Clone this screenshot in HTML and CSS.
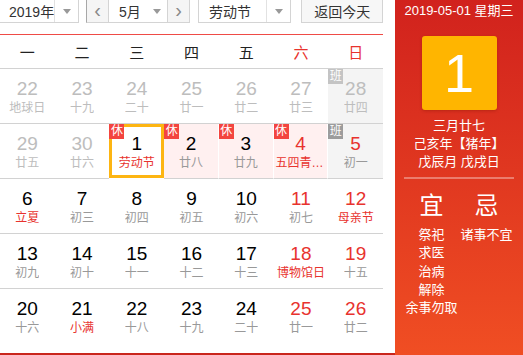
FILE: index.html
```html
<!DOCTYPE html>
<html lang="zh-CN">
<head>
  <meta charset="UTF-8">
  <title>万年历</title>
  <link rel="stylesheet" href="styles.css">
</head>
<body>
  <div class="calendar">
    <div class="main">
      <div class="toolbar">
        <div class="select year">
          <span class="value">2019年</span>
          <span class="drop"><i class="caret"></i></span>
        </div>
        <div class="month-group">
          <span class="nav prev">&lsaquo;</span>
          <div class="select month">
            <span class="value">5月</span>
            <span class="drop"><i class="caret"></i></span>
          </div>
          <span class="nav next">&rsaquo;</span>
        </div>
        <div class="select holiday">
          <span class="value">劳动节</span>
          <span class="drop"><i class="caret"></i></span>
        </div>
        <button class="today">返回今天</button>
      </div>

      <div class="weekdays">
        <span>一</span><span>二</span><span>三</span><span>四</span><span>五</span>
        <span class="weekend">六</span><span class="weekend">日</span>
      </div>

      <div class="grid">
        <div class="day other"><b>22</b><span>地球日</span></div>
        <div class="day other"><b>23</b><span>十九</span></div>
        <div class="day other"><b>24</b><span>二十</span></div>
        <div class="day other"><b>25</b><span>廿一</span></div>
        <div class="day other"><b>26</b><span>廿二</span></div>
        <div class="day other"><b>27</b><span>廿三</span></div>
        <div class="day other work"><em class="tag">班</em><b>28</b><span>廿四</span></div>

        <div class="day other"><b>29</b><span>廿五</span></div>
        <div class="day other"><b>30</b><span>廿六</span></div>
        <div class="day rest selected"><em class="tag">休</em><b>1</b><span class="fest">劳动节</span></div>
        <div class="day rest"><em class="tag">休</em><b>2</b><span>廿八</span></div>
        <div class="day rest"><em class="tag">休</em><b>3</b><span>廿九</span></div>
        <div class="day rest red"><em class="tag">休</em><b>4</b><span class="fest">五四青年节</span></div>
        <div class="day work red"><em class="tag">班</em><b>5</b><span>初一</span></div>

        <div class="day"><b>6</b><span class="fest">立夏</span></div>
        <div class="day"><b>7</b><span>初三</span></div>
        <div class="day"><b>8</b><span>初四</span></div>
        <div class="day"><b>9</b><span>初五</span></div>
        <div class="day"><b>10</b><span>初六</span></div>
        <div class="day red"><b>11</b><span>初七</span></div>
        <div class="day red"><b>12</b><span class="fest">母亲节</span></div>

        <div class="day"><b>13</b><span>初九</span></div>
        <div class="day"><b>14</b><span>初十</span></div>
        <div class="day"><b>15</b><span>十一</span></div>
        <div class="day"><b>16</b><span>十二</span></div>
        <div class="day"><b>17</b><span>十三</span></div>
        <div class="day red"><b>18</b><span class="fest">博物馆日</span></div>
        <div class="day red"><b>19</b><span>十五</span></div>

        <div class="day"><b>20</b><span>十六</span></div>
        <div class="day"><b>21</b><span class="fest">小满</span></div>
        <div class="day"><b>22</b><span>十八</span></div>
        <div class="day"><b>23</b><span>十九</span></div>
        <div class="day"><b>24</b><span>二十</span></div>
        <div class="day red"><b>25</b><span>廿一</span></div>
        <div class="day red"><b>26</b><span>廿二</span></div>
      </div>
    </div>

    <div class="side">
      <div class="side-date">2019-05-01 星期三</div>
      <div class="big-day">1</div>
      <div class="lunar">
        <p>三月廿七</p>
        <p>己亥年【猪年】</p>
        <p>戊辰月 戊戌日</p>
      </div>
      <div class="almanac">
        <div class="col">
          <h3>宜</h3>
          <p>祭祀</p>
          <p>求医</p>
          <p>治病</p>
          <p>解除</p>
          <p>余事勿取</p>
        </div>
        <div class="col">
          <h3>忌</h3>
          <p>诸事<span class="hl">不</span>宜</p>
        </div>
      </div>
    </div>
  </div>
</body>
</html>
```

FILE: styles.css
```css
* {
  box-sizing: border-box;
}

body {
  margin: 0;
  width: 523px;
  height: 355px;
  overflow: hidden;
  font-family: "Liberation Sans", "Noto Sans CJK SC", sans-serif;
  color: #333;
  background: #fff;
}

.calendar {
  display: flex;
  height: 355px;
}

.main {
  width: 395px;
  padding-right: 12px;
  border-bottom: 2px solid #c9261c;
}

/* toolbar */
.toolbar {
  display: flex;
  align-items: flex-start;
  height: 35px;
  border-bottom: 1px solid #ef4b46;
}

.select {
  display: flex;
  height: 27px;
  margin-top: -4px;
  border: 1px solid #d4d4d4;
  background: #fff;
  font-size: 14px;
  color: #333;
}

.select .value {
  flex: 1;
  display: flex;
  align-items: center;
  padding-top: 3px;
  white-space: nowrap;
}

.select .drop {
  display: flex;
  align-items: center;
  justify-content: center;
  padding-top: 3px;
  border-left: 1px solid #e2e2e2;
}

.caret {
  width: 0;
  height: 0;
  border-left: 4px solid transparent;
  border-right: 4px solid transparent;
  border-top: 5px solid #999;
}

.year {
  width: 79px;
  border-left: 0;
}

.year .value {
  padding-left: 9px;
}

.year .drop {
  width: 24px;
}

.month-group {
  display: flex;
  margin-left: 7px;
  margin-top: -4px;
  height: 27px;
  border: 1px solid #d4d4d4;
  border-left-color: #a8a8a8;
}

.month-group .select {
  margin-top: 0;
  height: 25px;
  width: 60px;
  border-width: 0 1px;
}

.month .value {
  padding-left: 10px;
}

.month .drop {
  width: 20px;
  border-left: 0;
}

.nav {
  width: 21px;
  display: flex;
  align-items: center;
  justify-content: center;
  padding-top: 2px;
  background: #f5f5f5;
  color: #888;
  font-size: 20px;
}

.holiday {
  width: 94px;
  margin-left: 8px;
}

.holiday .value {
  padding-left: 10px;
}

.holiday .drop {
  width: 24px;
}

.today {
  width: 82px;
  height: 27px;
  margin-top: -4px;
  margin-left: 10px;
  padding: 3px 0 0;
  border: 1px solid #d4d4d4;
  background: #f7f7f7;
  font-family: inherit;
  font-size: 14px;
  color: #333;
}

/* weekday header */
.weekdays {
  display: grid;
  grid-template-columns: repeat(7, 1fr);
  height: 34px;
  border-bottom: 1px solid #d2d2d2;
  font-size: 15px;
  color: #222;
}

.weekdays span {
  display: flex;
  align-items: center;
  justify-content: center;
}

.weekdays .weekend {
  color: #e8332e;
}

/* day grid */
.grid {
  display: grid;
  grid-template-columns: repeat(7, 1fr);
  grid-auto-rows: 55px;
}

.grid .day:nth-child(-n+28) {
  border-bottom: 1px solid #d2d2d2;
}

.day {
  position: relative;
  display: flex;
  flex-direction: column;
  align-items: center;
  padding-top: 10px;
  min-width: 0;
}

.day b {
  font-weight: normal;
  font-size: 19px;
  line-height: 20px;
  color: #000;
}

.day span {
  margin-top: 2px;
  max-width: 50px;
  font-size: 12px;
  line-height: 14px;
  color: #999;
  white-space: nowrap;
  overflow: hidden;
  text-overflow: ellipsis;
}

.day.red b {
  color: #e8332e;
}

.day span.fest {
  color: #e8332e;
}

.day.other b,
.day.other span {
  color: #bdbdbd;
}

.day.rest {
  background: #fff0f0;
  border-right: 1px solid #fff;
}

.day.work {
  background: #f4f4f4;
}

.day.selected {
  background: #fff;
  border: 3px solid #fdb512;
  padding-top: 7px;
}

.grid .day.selected {
  border-bottom: 3px solid #fdb512;
  margin-bottom: 1px;
}

.tag {
  position: absolute;
  top: 0;
  left: 0;
  width: 15px;
  height: 15px;
  font-style: normal;
  font-size: 12px;
  line-height: 15px;
  text-align: center;
  color: #fff;
  background: #f3453f;
}

.day.selected .tag {
  top: -3px;
  left: -3px;
}

.day.work .tag {
  background: #9c9c9c;
}

.day.other .tag {
  background: #c4c4c4;
}

/* side panel */
.side {
  width: 128px;
  background: linear-gradient(#d1221d, #f04e23);
  color: #fff;
  display: flex;
  flex-direction: column;
  align-items: center;
}

.side-date {
  margin-top: 3px;
  font-size: 13px;
  line-height: 16px;
}

.big-day {
  width: 75px;
  height: 74px;
  margin-top: 17px;
  border-radius: 3px;
  background: #ffb500;
  box-shadow: 0 1px 3px rgba(120, 20, 0, 0.35);
  font-size: 54px;
  line-height: 74px;
  text-align: center;
}

.lunar {
  margin-top: 7px;
  text-align: center;
  font-size: 13px;
  line-height: 18px;
}

.lunar p,
.almanac p {
  margin: 0;
}

.almanac {
  display: flex;
  width: 110px;
  margin-top: 6px;
  padding-top: 13px;
  border-top: 2px solid rgba(255, 255, 255, 0.35);
}

.almanac .col {
  width: 55px;
  display: flex;
  flex-direction: column;
  align-items: center;
  font-size: 13px;
  line-height: 18.3px;
  white-space: nowrap;
}

.almanac h3 {
  margin: 0 0 6px;
  font-size: 24px;
  line-height: 28px;
  font-weight: normal;
}

.almanac .hl {
  color: #fff;
}
```
